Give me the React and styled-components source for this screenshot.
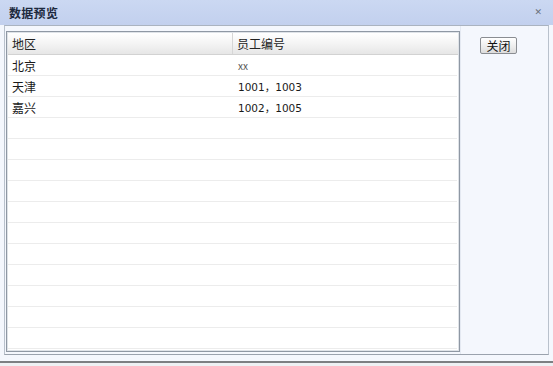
import React from "react";
import styled, { createGlobalStyle } from "styled-components";

const Global = createGlobalStyle`
  html, body { margin: 0; padding: 0; background: #eef0f3; }
  body { font-family: "Liberation Sans", "Noto Sans CJK SC", sans-serif; font-size: 12px; color: #111; }
`;

const Window = styled.div`
  width: 553px;
  height: 361px;
  border-bottom: 2px solid #7d7f82;
  background: #f4f7fd;
  display: flex;
  flex-direction: column;
  overflow: hidden;
`;

const TitleBar = styled.div`
  height: 25px;
  flex: none;
  display: flex;
  align-items: center;
  justify-content: space-between;
  padding: 0 11px 0 9px;
  background: linear-gradient(#cbd8f2, #c2d0ee);
`;

const Title = styled.div`
  font-family: "Noto Sans CJK SC", sans-serif;
  font-weight: 700;
  font-size: 12px;
  color: #1d2a3e;
  letter-spacing: 0.3px;
`;

const Close = styled.div`
  font-family: "DejaVu Sans", sans-serif;
  font-size: 9px;
  font-weight: 700;
  color: #6a717b;
  margin-top: -1px;
`;

const Body = styled.div`
  flex: 1;
  min-height: 0;
  display: flex;
  padding: 0 4px 6px 4px;
`;

const Frame = styled.div`
  flex: 1;
  min-height: 0;
  display: flex;
  border: 1px solid #b9c1cc;
  border-bottom-color: #9aa2ad;
  border-top-color: #aab3c0;
  background: #f4f7fd;
`;

const Grid = styled.div`
  width: 452px;
  min-height: 0;
  margin: 5px 0 2px 1px;
  border: 1px solid #8f98a4;
  box-shadow: inset 0 0 0 1px #dfe3e8;
  background: #fff;
  overflow: hidden;
  display: flex;
  flex-direction: column;
`;

const HeaderRow = styled.div`
  display: grid;
  flex: none;
  grid-template-columns: 225px 1fr;
  height: 21px;
  margin: 1px 1px 0 1px;
  background: linear-gradient(#ffffff, #f4f4f4 50%, #e6e6e6);
  border-bottom: 1px solid #d2d2d2;
`;

const HeadCell = styled.div`
  font-family: "Noto Sans CJK SC", sans-serif;
  font-size: 12px;
  color: #222;
  display: flex;
  align-items: center;
  padding-left: 4px;
  border-right: ${(p) => (p.$last ? "none" : "1px solid #d6d6d6")};
`;

const Row = styled.div`
  display: grid;
  grid-template-columns: 225px 1fr;
  height: 20px;
  margin: 0 2px 0 1px;
  border-bottom: 1px solid #ececec;
  flex: none;
`;

const Cell = styled.div`
  font-family: ${(p) =>
    p.$num ? '"DejaVu Sans", "Noto Sans CJK SC", sans-serif' : '"Noto Sans CJK SC", sans-serif'};
  font-size: ${(p) => (p.$small ? "10px" : p.$num ? "10.5px" : "12px")};
  color: ${(p) => (p.$small ? "#555" : "#1a1a1a")};
  display: flex;
  align-items: center;
  padding-left: ${(p) => (p.$second ? "5px" : "4px")};
  white-space: pre;
`;

const Side = styled.div`
  flex: 1;
  border-left: 1px solid #e4e9f2;
  padding: 11px 0 0 19px;
`;

const Button = styled.button`
  width: 37px;
  height: 17px;
  padding: 0;
  border: 1px solid #8a8d92;
  border-radius: 2px;
  background: linear-gradient(#ffffff, #ececec 60%, #dcdcdc);
  font-family: "Noto Sans CJK SC", sans-serif;
  font-size: 12px;
  line-height: 15px;
  color: #111;
  display: flex;
  align-items: center;
  justify-content: center;
`;

const data = [
  { region: "北京", ids: "xx", small: true },
  { region: "天津", ids: "1001，1003" },
  { region: "嘉兴", ids: "1002，1005" },
];

export default function App() {
  const rows = [...data];
  while (rows.length < 15) rows.push({ region: "", ids: "" });
  return (
    <>
      <Global />
      <Window>
        <TitleBar>
          <Title>数据预览</Title>
          <Close>✕</Close>
        </TitleBar>
        <Body>
          <Frame>
            <Grid>
              <HeaderRow>
                <HeadCell>地区</HeadCell>
                <HeadCell $last>员工编号</HeadCell>
              </HeaderRow>
              {rows.map((r, i) => (
                <Row key={i}>
                  <Cell>{r.region}</Cell>
                  <Cell $second $small={r.small} $num={!r.small}>
                    {r.ids}
                  </Cell>
                </Row>
              ))}
            </Grid>
            <Side>
              <Button>关闭</Button>
            </Side>
          </Frame>
        </Body>
      </Window>
    </>
  );
}
